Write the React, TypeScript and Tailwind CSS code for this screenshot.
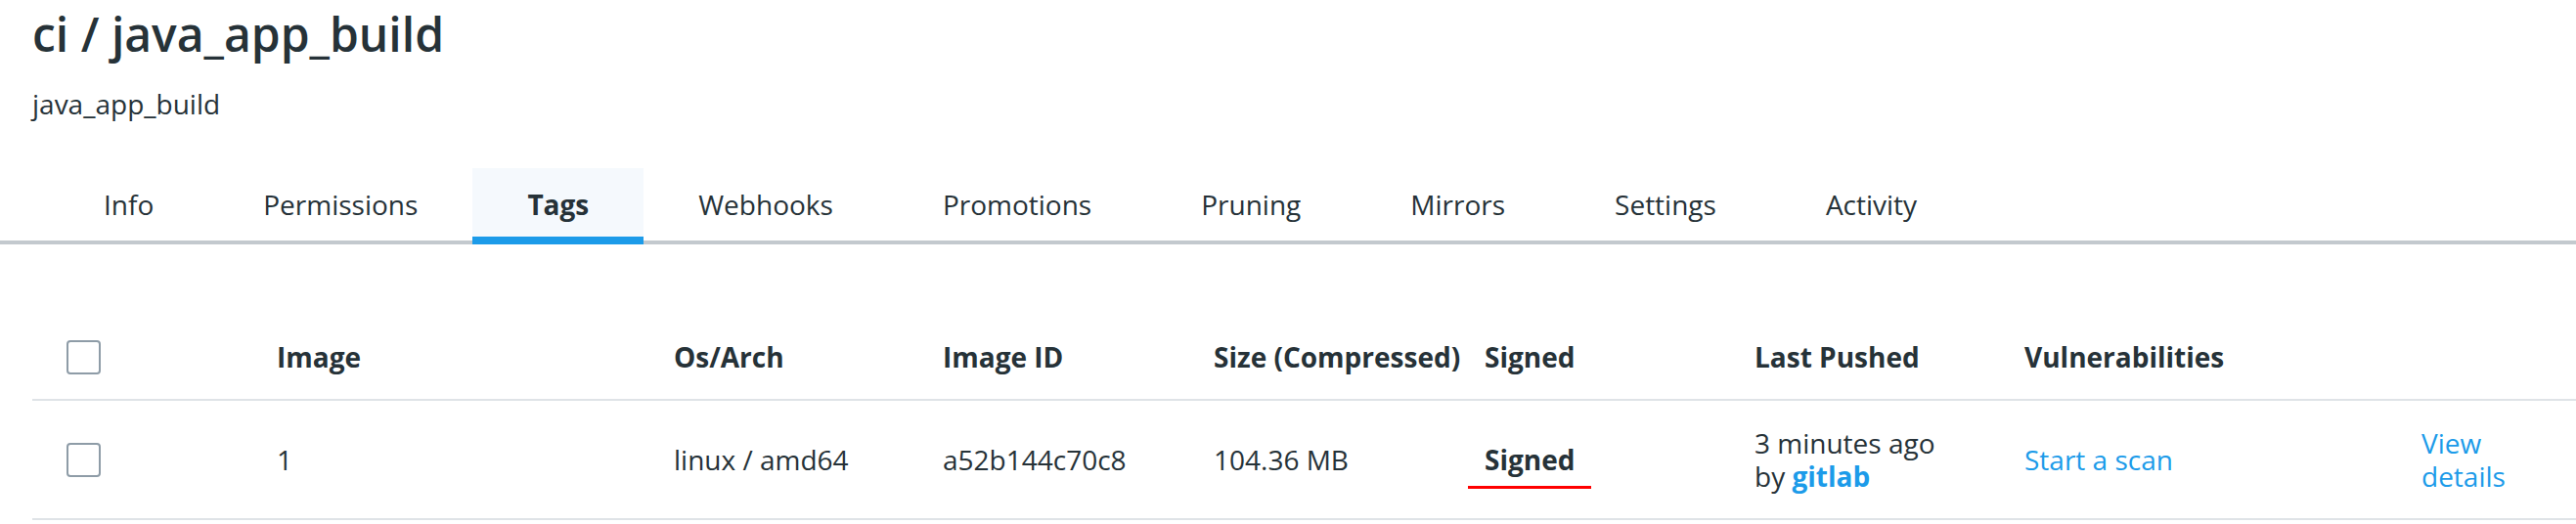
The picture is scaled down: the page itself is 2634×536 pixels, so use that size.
import React from "react";

const tabs = ["Info", "Permissions", "Tags", "Webhooks", "Promotions", "Pruning", "Mirrors", "Settings", "Activity"];

function Checkbox() {
  return <div className="w-[35px] h-[35px] border-2 border-[#8e9ca7] rounded-[4px] bg-white" />;
}

const cols = "grid grid-cols-[250px_406px_275px_277px_277px_276px_276px_406px_1fr]";

export default function App() {
  return (
    <div className="w-[2634px] h-[536px] bg-white font-['Open_Sans',sans-serif] text-[#263238] overflow-hidden">
      <div className="pl-[33px] pt-[6px]">
        <h1 className="text-[48px] leading-[58px] font-semibold">ci / java_app_build</h1>
        <p className="mt-[24px] text-[28px] leading-[36px]">java_app_build</p>
      </div>

      <div className="mt-[48px] flex border-b-4 border-[#c3c9ce] pl-[50px]">
        {tabs.map((t) => {
          const active = t === "Tags";
          return (
            <div
              key={t}
              className={
                active
                  ? "relative h-[74px] px-[56px] flex items-center text-[28px] leading-[38px] bg-[#f5f9fd] font-bold"
                  : "relative h-[74px] px-[56px] flex items-center text-[28px] leading-[38px]"
              }
            >
              {t}
              {active && <div className="absolute left-0 right-0 -bottom-[4px] h-[8px] bg-[#1c9be9]" />}
            </div>
          );
        })}
      </div>

      <div className="ml-[33px] mt-[72px] text-[28px] leading-[38px]">
        <div className={`${cols} h-[88px] items-center border-b-2 border-[#dfe3e7] font-bold`}>
          <div className="pl-[35px]">
            <Checkbox />
          </div>
          <div>Image</div>
          <div>Os/Arch</div>
          <div>Image ID</div>
          <div>Size (Compressed)</div>
          <div>Signed</div>
          <div>Last Pushed</div>
          <div>Vulnerabilities</div>
          <div />
        </div>
        <div className={`${cols} h-[122px] items-center border-b-2 border-[#dfe3e7]`}>
          <div className="pl-[35px]">
            <Checkbox />
          </div>
          <div>1</div>
          <div>linux / amd64</div>
          <div>a52b144c70c8</div>
          <div>104.36 MB</div>
          <div>
            <span className="relative inline-block font-bold">
              Signed
              <span className="absolute left-[-17px] top-[46px] w-[126px] h-[3px] bg-[#ff0000]" />
            </span>
          </div>
          <div className="leading-[34px]">
            <div>3 minutes ago</div>
            <div>
              by <span className="font-bold text-[#1c9be9]">gitlab</span>
            </div>
          </div>
          <div className="text-[#1c9be9]">Start a scan</div>
          <div className="w-[100px] leading-[34px] text-[#1c9be9]">View details</div>
        </div>
      </div>
    </div>
  );
}
